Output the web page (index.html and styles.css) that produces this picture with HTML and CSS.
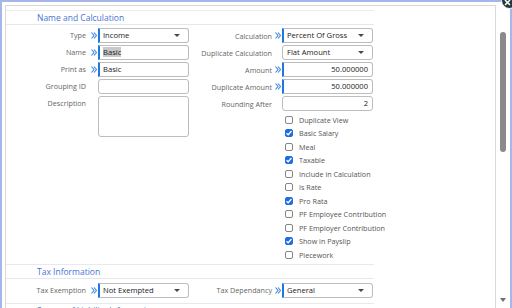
FILE: index.html
```html
<!DOCTYPE html>
<html lang="en">
<head>
    <meta charset="UTF-8">
    <meta name="viewport" content="width=device-width, initial-scale=1.0">
    <title>Pay Item</title>
    <link rel="stylesheet" href="styles.css">
</head>
<body>
    <div class="dialog">
        <div class="panel">
            <div class="form">
                <div class="group first">
                    <h2 class="group-title">Name and Calculation</h2>
                    <div class="group-body">
                        <div class="col col-left">
                            <span class="lbl">Type</span>
                            <span class="req"><svg width="6" height="7" viewBox="0 0 6 7"><path d="M0.5 0.5 L3 3.5 L0.5 6.5 M3 0.5 L5.5 3.5 L3 6.5"/></svg></span>
                            <div class="field select required">Income<i class="caret"></i></div>

                            <span class="lbl">Name</span>
                            <span class="req"><svg width="6" height="7" viewBox="0 0 6 7"><path d="M0.5 0.5 L3 3.5 L0.5 6.5 M3 0.5 L5.5 3.5 L3 6.5"/></svg></span>
                            <div class="field required"><span class="sel">Basic</span></div>

                            <span class="lbl">Print as</span>
                            <span class="req"><svg width="6" height="7" viewBox="0 0 6 7"><path d="M0.5 0.5 L3 3.5 L0.5 6.5 M3 0.5 L5.5 3.5 L3 6.5"/></svg></span>
                            <div class="field required">Basic</div>

                            <span class="lbl">Grouping ID</span>
                            <span></span>
                            <div class="field"></div>

                            <span class="lbl">Description</span>
                            <span></span>
                            <div class="field area"></div>
                        </div>

                        <div class="col col-right">
                            <span class="lbl">Calculation</span>
                            <span class="req"><svg width="6" height="7" viewBox="0 0 6 7"><path d="M0.5 0.5 L3 3.5 L0.5 6.5 M3 0.5 L5.5 3.5 L3 6.5"/></svg></span>
                            <div class="field select required">Percent Of Gross<i class="caret"></i></div>

                            <span class="lbl">Duplicate Calculation</span>
                            <span></span>
                            <div class="field select">Flat Amount<i class="caret"></i></div>

                            <span class="lbl">Amount</span>
                            <span class="req"><svg width="6" height="7" viewBox="0 0 6 7"><path d="M0.5 0.5 L3 3.5 L0.5 6.5 M3 0.5 L5.5 3.5 L3 6.5"/></svg></span>
                            <div class="field num required">50.000000</div>

                            <span class="lbl">Duplicate Amount</span>
                            <span class="req"><svg width="6" height="7" viewBox="0 0 6 7"><path d="M0.5 0.5 L3 3.5 L0.5 6.5 M3 0.5 L5.5 3.5 L3 6.5"/></svg></span>
                            <div class="field num required">50.000000</div>

                            <span class="lbl">Rounding After</span>
                            <span></span>
                            <div class="field num">2</div>

                            <ul class="checks">
                                <li><i class="cb"></i>Duplicate View</li>
                                <li><i class="cb on"></i>Basic Salary</li>
                                <li><i class="cb"></i>Meal</li>
                                <li><i class="cb on"></i>Taxable</li>
                                <li><i class="cb"></i>Include in Calculation</li>
                                <li><i class="cb"></i>Is Rate</li>
                                <li><i class="cb on"></i>Pro Rata</li>
                                <li><i class="cb"></i>PF Employee Contribution</li>
                                <li><i class="cb"></i>PF Employer Contribution</li>
                                <li><i class="cb on"></i>Show in Payslip</li>
                                <li><i class="cb"></i>Piecework</li>
                            </ul>
                        </div>
                    </div>
                </div>

                <div class="group">
                    <h2 class="group-title">Tax Information</h2>
                    <div class="group-body tax">
                        <div class="col col-left">
                            <span class="lbl">Tax Exemption</span>
                            <span class="req"><svg width="6" height="7" viewBox="0 0 6 7"><path d="M0.5 0.5 L3 3.5 L0.5 6.5 M3 0.5 L5.5 3.5 L3 6.5"/></svg></span>
                            <div class="field select required">Not Exempted<i class="caret"></i></div>
                        </div>
                        <div class="col col-right">
                            <span class="lbl">Tax Dependancy</span>
                            <span class="req"><svg width="6" height="7" viewBox="0 0 6 7"><path d="M0.5 0.5 L3 3.5 L0.5 6.5 M3 0.5 L5.5 3.5 L3 6.5"/></svg></span>
                            <div class="field select required">General<i class="caret"></i></div>
                        </div>
                    </div>
                </div>

                <div class="group">
                    <h2 class="group-title">Source of Liability Information</h2>
                </div>
            </div>
        </div>

        <div class="scrollbar">
            <div class="thumb"></div>
            <i class="arrow-down"></i>
        </div>

        <div class="close">
            <svg width="7" height="7" viewBox="0 0 7 7"><path d="M1 1 L6 6 M6 1 L1 6"/></svg>
        </div>
    </div>
</body>
</html>
```

FILE: styles.css
```css
* {
    box-sizing: border-box;
}
html, body {
    overflow: hidden;
}
body {
    margin: 0;
    font-family: "Open Sans", "Noto Sans", sans-serif;
    background-color: #fff;
}
.dialog {
    position: relative;
    display: flex;
    width: 512px;
    height: 308px;
    border: 2px solid #a6b6e8;
    border-bottom: 0;
}
.panel {
    flex: 1;
    margin: 3px 0 0 3px;
    border: 1px solid #d9d9d9;
    border-bottom: 0;
    overflow: hidden;
}
.form {
    width: 368px;
}
.group {
    border-top: 1px solid #e6e9f0;
}
.group.first {
    margin-top: 4px;
    border-top-color: #ececec;
}
.group-title {
    margin: 0;
    height: 14px;
    padding-left: 31px;
    font-size: 8.5px;
    font-weight: normal;
    line-height: 13px;
    color: #4675d3;
    border-bottom: 1px solid #e3e7f0;
}
.group-body {
    display: flex;
    padding: 3px 0 2px;
}
.group-body.tax {
    padding: 4px 0 5px;
}
.col {
    display: grid;
    grid-auto-rows: 15px;
    row-gap: 2px;
    align-items: center;
    align-self: start;
}
.col-left {
    grid-template-columns: 80px 12px 91px;
    grid-template-rows: repeat(4, 15px) 41px;
}
.col-right {
    grid-template-columns: 83px 10px 91px;
    grid-template-rows: repeat(5, 15px) auto;
}
.tax .col-left,
.tax .col-right {
    grid-template-rows: 15px;
}
.lbl {
    font-size: 7.2px;
    color: #666;
    text-align: right;
    white-space: nowrap;
}
.col-left .lbl {
    align-self: start;
    line-height: 15px;
}
.req {
    display: flex;
    justify-content: center;
    padding-left: 1px;
}
.col-left .req {
    justify-content: flex-start;
    padding-left: 5px;
}
.req svg path {
    fill: none;
    stroke: #3d86e6;
    stroke-width: 1.1;
}
.field {
    position: relative;
    height: 15px;
    padding: 0 4px;
    border: 1px solid #bdbdbd;
    border-radius: 3px;
    font-size: 7.6px;
    line-height: 13px;
    color: #222;
    white-space: nowrap;
    background-color: #fff;
}
.field.required {
    border-left: 2px solid #1d78e3;
    border-radius: 0 3px 3px 0;
    padding-left: 3px;
}
.field.num {
    text-align: right;
}
.field.area {
    height: 41px;
}
.sel {
    background-color: #c9c9c9;
}
.caret {
    position: absolute;
    right: 8px;
    top: 5px;
    border-left: 3px solid transparent;
    border-right: 3px solid transparent;
    border-top: 3px solid #4a4a4a;
}
.checks {
    grid-column: 3;
    margin: 0;
    padding: 0 0 0 3px;
    list-style: none;
}
.checks li {
    display: flex;
    align-items: center;
    height: 13.5px;
    font-size: 7.2px;
    color: #555;
    white-space: nowrap;
}
.cb {
    flex: none;
    width: 8px;
    height: 8px;
    margin-right: 6px;
    border: 1px solid #858585;
    border-radius: 2px;
    background-color: #fff;
}
.cb.on {
    border-color: #1f6de0;
    background: #1f6de0 url("data:image/svg+xml;utf8,<svg xmlns='http://www.w3.org/2000/svg' viewBox='0 0 8 8'><path d='M1.5 4.2 L3.2 5.8 L6.5 2' fill='none' stroke='white' stroke-width='1.3'/></svg>") center / 8px 8px no-repeat;
}
.scrollbar {
    position: relative;
    width: 14px;
}
.thumb {
    position: absolute;
    left: 4px;
    top: 30px;
    width: 6px;
    height: 120px;
    border-radius: 3px;
    background-color: #8a8a8a;
}
.arrow-down {
    position: absolute;
    left: 4px;
    top: 296px;
    border-left: 3px solid transparent;
    border-right: 3px solid transparent;
    border-top: 4px solid #707070;
}
.close {
    position: absolute;
    left: 499px;
    top: -10px;
    width: 17px;
    height: 17px;
    display: flex;
    align-items: flex-end;
    padding: 0 0 2px 2px;
    border: 1px solid #fff;
    border-radius: 50%;
    background-color: #21393f;
}
.close svg path {
    stroke: #fff;
    stroke-width: 1.5;
}
```
